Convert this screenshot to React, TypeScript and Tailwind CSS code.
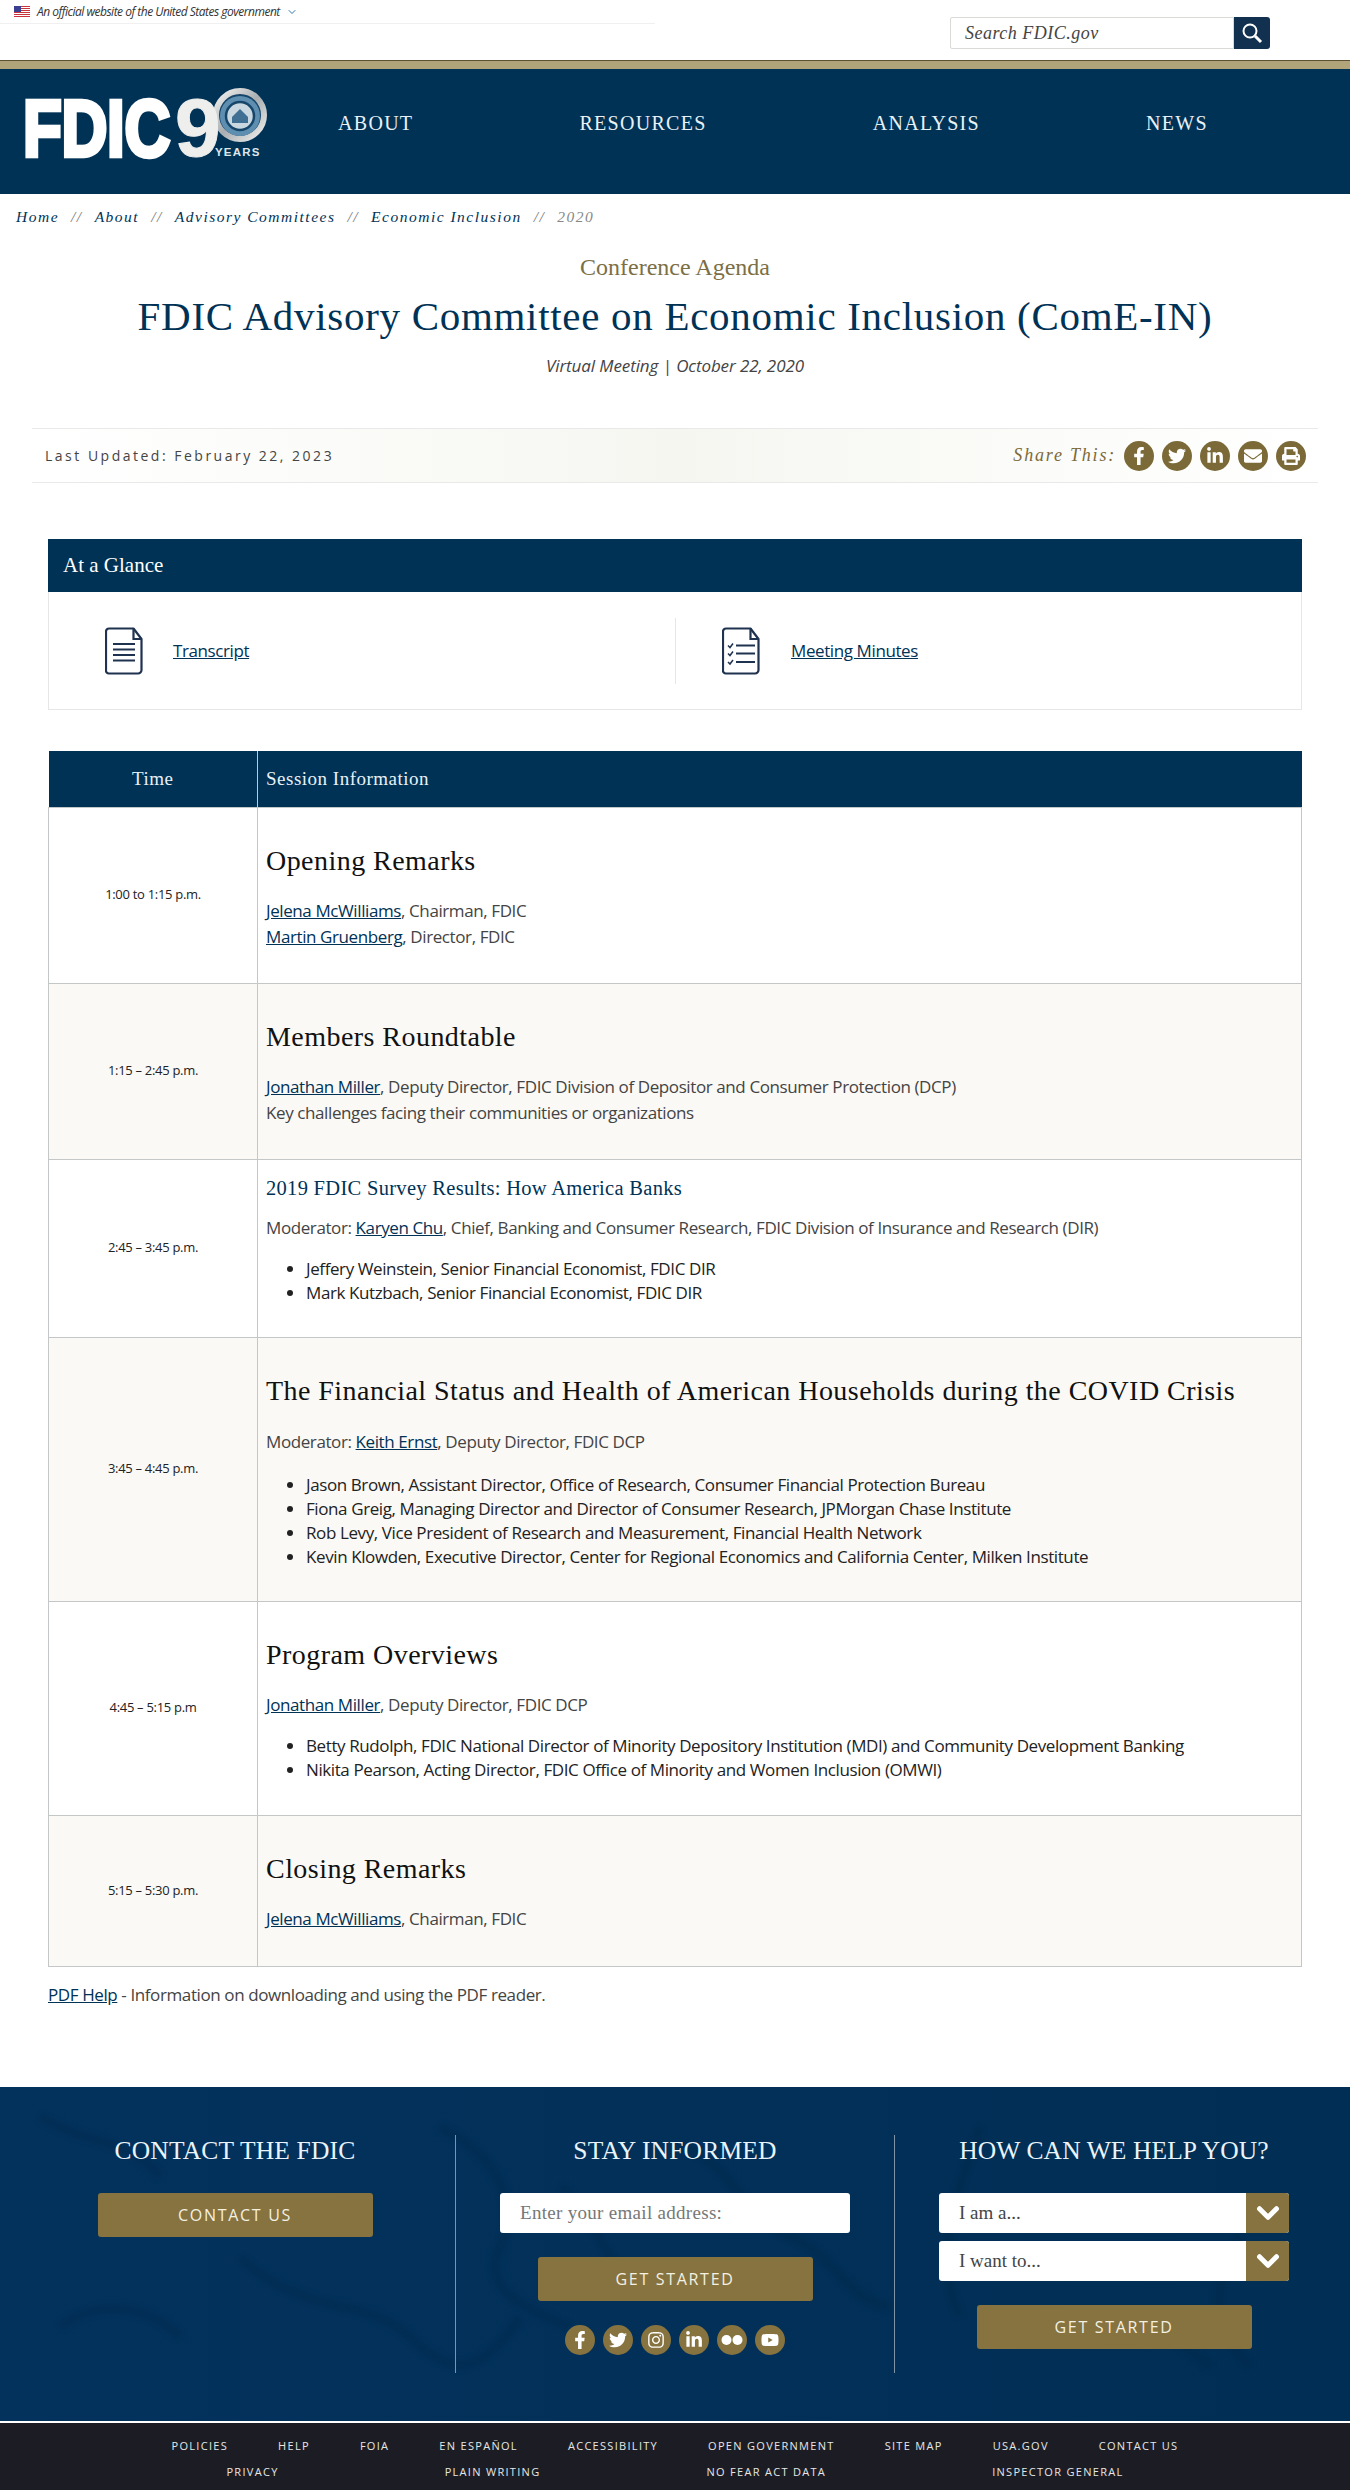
import { FaFacebookF, FaTwitter, FaLinkedinIn, FaEnvelope, FaPrint, FaInstagram, FaYoutube } from "react-icons/fa";
import { ChevronDown } from "lucide-react";
import type { ReactNode } from "react";

const serif = "font-['Liberation_Serif',serif]";

function Logo() {
  return (
    <svg width="250" height="100" viewBox="0 0 250 100" className="shrink-0">
      <defs>
        <linearGradient id="ring" x1="0" y1="0" x2="1" y2="1">
          <stop offset="0" stopColor="#f4f4f2" />
          <stop offset="0.5" stopColor="#a9adb0" />
          <stop offset="1" stopColor="#f0f0ee" />
        </linearGradient>
      </defs>
      <text x="1" y="82" fontFamily="Liberation Sans" fontWeight="700" fontSize="80" fill="#fff" stroke="#fff" strokeWidth="4.500" textLength="147" lengthAdjust="spacingAndGlyphs">
        FDIC
      </text>
      <circle cx="218" cy="41" r="24" fill="#17466b" stroke="url(#ring)" strokeWidth="6" />
      <circle cx="218" cy="42" r="20" fill="#5f8fb0" />
      <circle cx="218" cy="42" r="14" fill="#c9d8e0" stroke="#17466b" strokeWidth="2.500" />
      <path d="M210 43l8-8 8 8v6h-16z" fill="#3f6f92" />
      <text x="153" y="82" fontFamily="Liberation Sans" fontWeight="700" fontSize="82" fill="#eeeeec" stroke="#eeeeec" strokeWidth="1">
        9
      </text>
      <text x="193" y="82" fontFamily="Liberation Sans" fontWeight="700" fontSize="11.500" fill="#dfe7ec" letterSpacing="1.200">
        YEARS
      </text>
    </svg>
  );
}

function DocIcon({ checks }: { checks?: boolean }) {
  return (
    <svg width="38" height="48" viewBox="0 0 38 48" fill="none" stroke="#1f3350" strokeWidth="2.200" className="shrink-0">
      <path d="M4 1.500h24.500l8 10.500V43a3.500 3.500 0 0 1-3.500 3.500H4A3 3 0 0 1 1 43V4.500a3 3 0 0 1 3-3z" strokeLinejoin="round" />
      <path d="M28.500 1.500V12h8" />
      {checks ? (
        <g>
          <path d="M14 18.500h19M14 26.500h19M14 35h19" />
          <path d="M6 18.500l2 2 3-4M6 26.500l2 2 3-4M6 35l2 2 3-4" strokeWidth="1.500" />
        </g>
      ) : (
        <path d="M8 17h22M8 22.500h22M8 28h22M8 33.500h22" />
      )}
    </svg>
  );
}

function FlickrDots() {
  return (
    <svg width="22" height="12" viewBox="0 0 22 12" fill="#fff">
      <circle cx="5.500" cy="6" r="5" />
      <circle cx="16.500" cy="6" r="5" />
    </svg>
  );
}

function Circle({ children, bg = "bg-[#7b6a38]" }: { children: ReactNode; bg?: string }) {
  return (
    <span className={`flex h-[30px] w-[30px] items-center justify-center rounded-full text-[18px] text-white ${bg}`}>
      {children}
    </span>
  );
}

function Name({ children }: { children: ReactNode }) {
  return <a className="text-[#003256] underline">{children}</a>;
}

function Crumb({ children }: { children: ReactNode }) {
  return <a className="text-[#003256]">{children}</a>;
}

function GoldButton({ children }: { children: ReactNode }) {
  return (
    <button className="h-[44px] w-[275px] rounded-[3px] bg-[#86733f] text-[16px] tracking-[1.7px] text-[#f4f0e2]">
      {children}
    </button>
  );
}

function SelectBox({ label }: { label: string }) {
  return (
    <div className="flex h-[40px] w-[350px] overflow-hidden rounded-[3px] bg-white">
      <span className={`flex-1 pl-[20px] text-[19px] leading-[40px] text-[#444] ${serif}`}>{label}</span>
      <span className="flex w-[43px] items-center justify-center bg-[#86733f]">
        <ChevronDown size={34} strokeWidth={3.500} className="text-white" />
      </span>
    </div>
  );
}

function Row({ time, height, shade, children }: { time: string; height: string; shade?: boolean; children: ReactNode }) {
  return (
    <tr className={`${height} ${shade ? "bg-[#faf9f6]" : "bg-white"}`}>
      <td className="border border-[#c4c7c7] text-center text-[13px] tracking-[-0.3px] text-[#222]">{time}</td>
      <td className="border border-[#c4c7c7] pl-[8px] pr-[8px] align-top">{children}</td>
    </tr>
  );
}

function Title({ children }: { children: ReactNode }) {
  return <h2 className={`text-[28px] leading-[36px] tracking-[0.45px] text-[#111] ${serif}`}>{children}</h2>;
}

function Panel({ items, wide }: { items: string[]; wide?: boolean }) {
  return (
    <ul className={`${wide ? "mt-[18px]" : "mt-[16px]"} list-disc pl-[40px] leading-[24px] text-[#222]`}>
      {items.map((item) => (
        <li key={item}>{item}</li>
      ))}
    </ul>
  );
}

const footerRow1 = ["POLICIES", "HELP", "FOIA", "EN ESPAÑOL", "ACCESSIBILITY", "OPEN GOVERNMENT", "SITE MAP", "USA.GOV", "CONTACT US"];
const footerRow2 = ["PRIVACY", "PLAIN WRITING", "NO FEAR ACT DATA", "INSPECTOR GENERAL"];

export default function App() {
  return (
    <div className="w-[1350px] bg-white font-['Open_Sans',sans-serif] text-[17px] tracking-[-0.4px] text-[#444]">
      {/* Top strip */}
      <div className="flex h-[60px] bg-white">
        <div className="h-[24px] w-[655px] border-b border-[#f0f0f0] pl-[14px]">
          <div className="flex h-[23px] items-center">
            <svg width="16" height="11" viewBox="0 0 16 11" className="shrink-0">
              <rect width="16" height="11" fill="#fff" />
              <path d="M0 .5h16M0 2.500h16M0 4.500h16M0 6.500h16M0 8.500h16M0 10.500h16" stroke="#c9343c" />
              <rect width="7" height="6" fill="#3b3f8f" />
            </svg>
            <span className="ml-[7px] text-[12px] italic tracking-[-0.5px] text-[#333]">An official website of the United States government</span>
            <ChevronDown size={12} className="ml-[6px] text-[#2e78b8]" />
          </div>
        </div>
        <div className="ml-[295px] mt-[17px] flex h-[32px]">
          <div className={`w-[284px] rounded-l-[2px] border border-[#d9dbd6] bg-white pl-[14px] text-[18px] italic leading-[30px] tracking-[0.5px] text-[#444] ${serif}`}>
            Search FDIC.gov
          </div>
          <button className="flex w-[36px] items-center justify-center rounded-r-[3px] bg-[#12304f]">
            <svg width="22" height="22" viewBox="0 0 22 22" fill="none" stroke="#fff">
              <circle cx="9" cy="9" r="6.500" strokeWidth="2" />
              <path d="M14 14l6 6" strokeWidth="3" />
            </svg>
          </button>
        </div>
      </div>

      {/* Masthead */}
      <div className="h-[9px] border-t border-[#5c5233] bg-[#b1a47a]" />
      <header className="flex h-[125px] items-start bg-[#003256] pl-[22px]">
        <div className="mt-[5px]">
          <Logo />
        </div>
        <nav className={`ml-[66px] mt-[41px] flex gap-[166px] text-[20px] leading-[26px] tracking-[1.3px] text-[#e8f1f6] ${serif}`}>
          <a>ABOUT</a>
          <a>RESOURCES</a>
          <a>ANALYSIS</a>
          <a>NEWS</a>
        </nav>
      </header>

      {/* Breadcrumb */}
      <div className={`flex gap-[12px] pl-[16px] pt-[12px] text-[15.500px] italic leading-[22px] tracking-[1.5px] ${serif}`}>
        <Crumb>Home</Crumb>
        <span className="text-[#777]">//</span>
        <Crumb>About</Crumb>
        <span className="text-[#777]">//</span>
        <Crumb>Advisory Committees</Crumb>
        <span className="text-[#777]">//</span>
        <Crumb>Economic Inclusion</Crumb>
        <span className="text-[#777]">//</span>
        <span className="text-[#888]">2020</span>
      </div>

      {/* Title */}
      <div className="pt-[24px] text-center">
        <p className={`text-[24px] leading-[30px] tracking-normal text-[#7d6f45] ${serif}`}>Conference Agenda</p>
        <h1 className={`mt-[8px] text-[41px] leading-[52px] tracking-[0.7px] text-[#003256] ${serif}`}>
          FDIC Advisory Committee on Economic Inclusion (ComE-IN)
        </h1>
        <p className="mt-[12px] italic leading-[24px] tracking-[-0.1px]">Virtual Meeting | October 22, 2020</p>
      </div>

      {/* Updated + share bar */}
      <div className="mx-[32px] mt-[50px] flex h-[55px] items-center justify-between border-y border-[#e9e9e9] bg-gradient-to-r from-white via-[#f6f6f1] to-white pl-[13px] pr-[12px]">
        <span className="text-[14px] tracking-[2.5px]">Last Updated: February 22, 2023</span>
        <div className="flex items-center">
          <span className={`mr-[8px] text-[18px] italic tracking-[1.8px] text-[#7b6a38] ${serif}`}>Share This:</span>
          <div className="flex gap-[8px]">
            <Circle><FaFacebookF /></Circle>
            <Circle><FaTwitter /></Circle>
            <Circle><FaLinkedinIn /></Circle>
            <Circle><FaEnvelope /></Circle>
            <Circle><FaPrint /></Circle>
          </div>
        </div>
      </div>

      {/* At a Glance */}
      <section className="mx-[48px] mt-[56px] w-[1254px] border-x border-b border-[#e6e6e6]">
        <div className={`-mx-px h-[53px] bg-[#003256] pl-[15px] text-[21px] leading-[52px] tracking-normal text-white ${serif}`}>At a Glance</div>
        <div className="flex h-[117px] items-center">
          <div className="flex h-[66px] w-[627px] items-center border-r border-[#e6e6e6] pl-[56px]">
            <DocIcon />
            <a className="ml-[30px] mt-[1px] text-[#003256] underline">Transcript</a>
          </div>
          <div className="flex h-[66px] items-center pl-[46px]">
            <DocIcon checks />
            <a className="ml-[31px] mt-[1px] text-[#003256] underline">Meeting Minutes</a>
          </div>
        </div>
      </section>

      {/* Agenda table */}
      <table className="mx-[48px] mt-[41px] w-[1254px] table-fixed border-collapse">
        <thead>
          <tr className={`h-[56px] bg-[#003256] text-[19px] font-normal text-[#e8f1f6] ${serif}`}>
            <th className="w-[209px] text-center font-normal tracking-[0.5px]">Time</th>
            <th className="border-l border-[#c4c7c7] pl-[8px] text-left font-normal tracking-[0.5px]">Session Information</th>
          </tr>
        </thead>
        <tbody>
          <Row time="1:00 to 1:15 p.m." height="h-[176px]">
            <div className="pt-[35px]">
              <Title>Opening Remarks</Title>
              <p className="mt-[19px] leading-[26px]"><Name>Jelena McWilliams</Name>, Chairman, FDIC</p>
              <p className="leading-[26px]"><Name>Martin Gruenberg</Name>, Director, FDIC</p>
            </div>
          </Row>
          <Row time="1:15 – 2:45 p.m." height="h-[176px]" shade>
            <div className="pt-[35px]">
              <Title>Members Roundtable</Title>
              <p className="mt-[19px] leading-[26px]"><Name>Jonathan Miller</Name>, Deputy Director, FDIC Division of Depositor and Consumer Protection (DCP)</p>
              <p className="leading-[26px]">Key challenges facing their communities or organizations</p>
            </div>
          </Row>
          <Row time="2:45 – 3:45 p.m." height="h-[178px]">
            <div className="pt-[14px]">
              <h3 className={`text-[20.500px] leading-[28px] tracking-[0.3px] text-[#003256] ${serif}`}>2019 FDIC Survey Results: How America Banks</h3>
              <p className="mt-[13px] leading-[26px]">Moderator: <Name>Karyen Chu</Name>, Chief, Banking and Consumer Research, FDIC Division of Insurance and Research (DIR)</p>
              <Panel items={["Jeffery Weinstein, Senior Financial Economist, FDIC DIR", "Mark Kutzbach, Senior Financial Economist, FDIC DIR"]} />
            </div>
          </Row>
          <Row time="3:45 – 4:45 p.m." height="h-[264px]" shade>
            <div className="pt-[35px]">
              <Title>The Financial Status and Health of American Households during the COVID Crisis</Title>
              <p className="mt-[20px] leading-[26px]">Moderator: <Name>Keith Ernst</Name>, Deputy Director, FDIC DCP</p>
              <Panel wide items={["Jason Brown, Assistant Director, Office of Research, Consumer Financial Protection Bureau", "Fiona Greig, Managing Director and Director of Consumer Research, JPMorgan Chase Institute", "Rob Levy, Vice President of Research and Measurement, Financial Health Network", "Kevin Klowden, Executive Director, Center for Regional Economics and California Center, Milken Institute"]} />
            </div>
          </Row>
          <Row time="4:45 – 5:15 p.m" height="h-[214px]">
            <div className="pt-[35px]">
              <Title>Program Overviews</Title>
              <p className="mt-[19px] leading-[26px]"><Name>Jonathan Miller</Name>, Deputy Director, FDIC DCP</p>
              <Panel items={["Betty Rudolph, FDIC National Director of Minority Depository Institution (MDI) and Community Development Banking", "Nikita Pearson, Acting Director, FDIC Office of Minority and Women Inclusion (OMWI)"]} />
            </div>
          </Row>
          <Row time="5:15 – 5:30 p.m." height="h-[151px]" shade>
            <div className="pt-[35px]">
              <Title>Closing Remarks</Title>
              <p className="mt-[19px] leading-[26px]"><Name>Jelena McWilliams</Name>, Chairman, FDIC</p>
            </div>
          </Row>
        </tbody>
      </table>

      <p className="ml-[48px] mt-[16px] leading-[24px]"><Name>PDF Help</Name> - Information on downloading and using the PDF reader.</p>

      {/* Footer */}
      <footer className="relative mt-[80px] h-[334px] overflow-hidden bg-gradient-to-r from-[#03325d] to-[#012e54] tracking-normal">
        <svg className="absolute inset-0 blur-[2px]" width="1350" height="334" viewBox="0 0 1350 334" fill="none" stroke="#01284a" strokeWidth="10" opacity="0.35">
          <path d="M240 170c60 60 130 40 170 80s70 40 110-20M440 40c60 30 80 80 60 120s20 60 70 80M560 100c40 30 40 80 80 90M980 40c-20 60-50 120-20 190M1240 150c-30 50-30 90 10 130M40 30c50 30 90 20 120 60M680 60c50 10 60 70 110 90s50 60 100 70M1080 250c40-20 90-10 130 30M60 240c40-30 90-20 120 10" />
        </svg>
        <div className="relative flex h-[238px] translate-y-[48px]">
          <div className="flex w-[455px] flex-col items-center pl-[15px]">
            <h2 className={`text-[25.500px] leading-[32px] tracking-[0.2px] text-[#eaf4fa] ${serif}`}>CONTACT THE FDIC</h2>
            <div className="mt-[26px]">
              <GoldButton>CONTACT US</GoldButton>
            </div>
          </div>
          <div className="flex w-[440px] flex-col items-center border-x border-[#7e93a6]">
            <h2 className={`text-[25.500px] leading-[32px] tracking-[0.2px] text-[#eaf4fa] ${serif}`}>STAY INFORMED</h2>
            <div className={`mt-[26px] h-[40px] w-[350px] rounded-[3px] bg-white pl-[20px] text-[19px] leading-[40px] tracking-[0.3px] text-[#777] ${serif}`}>Enter your email address:</div>
            <div className="mt-[24px]">
              <GoldButton>GET STARTED</GoldButton>
            </div>
            <div className="mt-[24px] flex gap-[8px]">
              <Circle bg="bg-[#86733f]"><FaFacebookF /></Circle>
              <Circle bg="bg-[#86733f]"><FaTwitter /></Circle>
              <Circle bg="bg-[#86733f]"><FaInstagram /></Circle>
              <Circle bg="bg-[#86733f]"><FaLinkedinIn /></Circle>
              <Circle bg="bg-[#86733f]"><FlickrDots /></Circle>
              <Circle bg="bg-[#86733f]"><FaYoutube /></Circle>
            </div>
          </div>
          <div className="flex w-[438px] flex-col items-center">
            <h2 className={`text-[25.500px] leading-[32px] tracking-[0.1px] text-[#eaf4fa] ${serif}`}>HOW CAN WE HELP YOU?</h2>
            <div className="mt-[26px] flex flex-col gap-[8px]">
              <SelectBox label="I am a..." />
              <SelectBox label="I want to..." />
            </div>
            <div className="mt-[24px]">
              <GoldButton>GET STARTED</GoldButton>
            </div>
          </div>
        </div>
      </footer>
      <div className="h-[2px] bg-white" />
      <div className="h-[67px] bg-[#1c1d24] pt-[10px] text-[11px] leading-[26px] tracking-[1.3px] text-[#e6e6e6]">
        <div className="flex justify-center gap-[50px]">
          {footerRow1.map((link) => <a key={link}>{link}</a>)}
        </div>
        <div className="flex justify-center gap-[166px]">
          {footerRow2.map((link) => <a key={link}>{link}</a>)}
        </div>
      </div>
    </div>
  );
}
